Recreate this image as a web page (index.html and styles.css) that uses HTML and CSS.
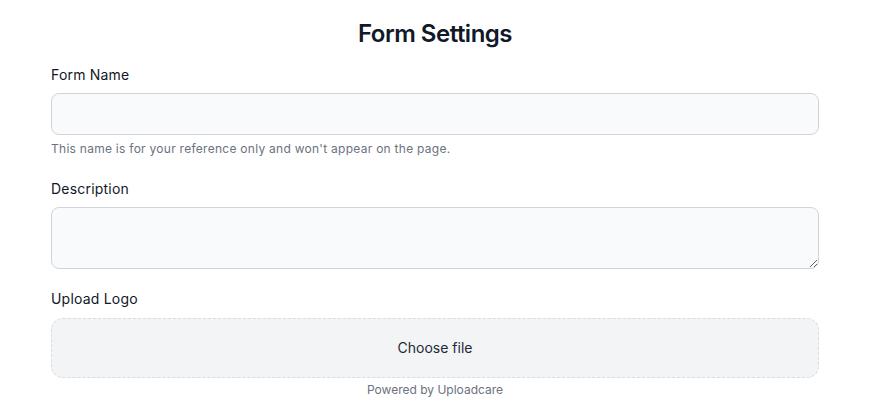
FILE: index.html
```html
<!DOCTYPE html>
<html>
<head>
<meta charset="utf-8">
<link rel="stylesheet" href="styles.css">
</head>
<body>
<div class="page">
  <h1 class="title">Form Settings</h1>
  <div class="field">
    <label class="label">Form Name</label>
    <input class="input" type="text">
    <p class="help">This name is for your reference only and won't appear on the page.</p>
  </div>
  <div class="field field-desc">
    <label class="label">Description</label>
    <textarea class="textarea" rows="2"></textarea>
  </div>
  <div class="field field-upload">
    <label class="label">Upload Logo</label>
    <div class="upload"><span class="upload-text">Choose file</span></div>
    <p class="powered">Powered by Uploadcare</p>
  </div>
</div>
</body>
</html>
```

FILE: styles.css
```css
* { box-sizing: border-box; }
html, body { margin: 0; padding: 0; background: #ffffff; }
body { font-family: Inter, "Noto Sans", sans-serif; color: #111827; }
.page {
  width: 768px;
  margin-left: 51px;
  padding-top: 18px;
  display: flex;
  flex-direction: column;
}
.title {
  margin: 0 0 15px 0;
  font-size: 24px;
  line-height: 32px;
  font-weight: 600;
  letter-spacing: -0.5px;
  text-align: center;
  color: #111827;
}
.field { display: flex; flex-direction: column; }
.label {
  font-size: 14px;
  line-height: 20px;
  font-weight: 400;
  letter-spacing: 0.2px;
  color: #111827;
  margin-bottom: 8px;
}
.input, .textarea {
  width: 100%;
  border: 1px solid #d1d5db;
  border-radius: 8px;
  background: #f9fafb;
  font-family: inherit;
  font-size: 14px;
  line-height: 20px;
  padding: 10px 12px;
  margin: 0;
  display: block;
}
.input { height: 42px; }
.textarea { height: 62px; resize: vertical; }
.help {
  margin: 6px 0 0 0;
  font-size: 12px;
  line-height: 16px;
  letter-spacing: 0.27px;
  color: #6b7280;
}
.field-desc { margin-top: 22px; }
.field-upload { margin-top: 20px; }
.field-upload .label { margin-bottom: 9px; }
.upload {
  height: 60px;
  border: 1px dashed #d9dbe0;
  border-radius: 12px;
  background: #f3f4f6;
  display: flex;
  align-items: center;
  justify-content: center;
}
.upload-text {
  font-size: 14px;
  line-height: 20px;
  color: #1f2937;
}
.powered {
  margin: 4px 0 0 0;
  text-align: center;
  font-size: 12px;
  line-height: 16px;
  color: #6b7280;
}
```
